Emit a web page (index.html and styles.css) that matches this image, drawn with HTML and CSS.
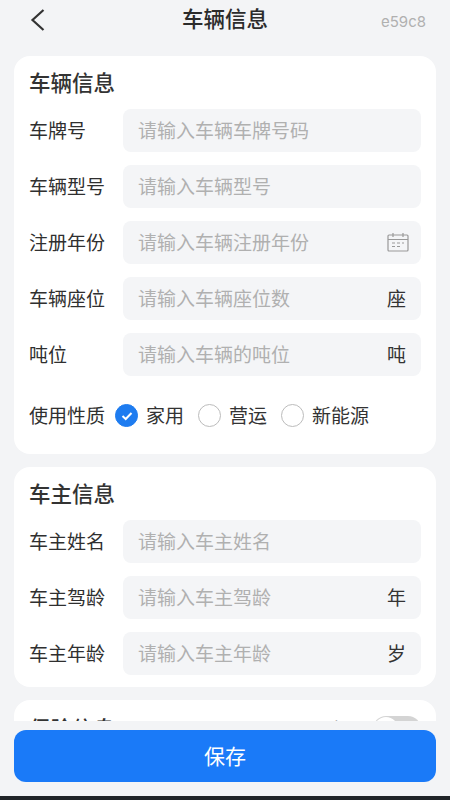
FILE: index.html
```html
<!DOCTYPE html>
<html lang="zh">
<head>
<meta charset="utf-8">
<title>车辆信息</title>
<link rel="stylesheet" href="styles.css">
</head>
<body>
<div class="screen">
  <header class="nav">
    <svg class="back" width="16" height="24" viewBox="0 0 16 24"><path d="M13.5 2 L2.5 12 L13.5 22" fill="none" stroke="#333" stroke-width="2.2"/></svg>
    <h1 class="nav-title">车辆信息</h1>
    <span class="nav-code">e59c8</span>
  </header>
  <main class="content">
    <section class="card">
      <h2 class="card-title">车辆信息</h2>
      <div class="row"><span class="label">车牌号</span><div class="field"><span class="ph">请输入车辆车牌号码</span></div></div>
      <div class="row"><span class="label">车辆型号</span><div class="field"><span class="ph">请输入车辆型号</span></div></div>
      <div class="row"><span class="label">注册年份</span><div class="field"><span class="ph">请输入车辆注册年份</span>
        <svg class="cal" width="22" height="20" viewBox="0 0 22 20" fill="none" stroke="#999" stroke-width="1.2"><rect x="1" y="3" width="20" height="16" rx="1"/><path d="M1 7.5H21M6 1V5M16 1V5"/><path d="M5 11H8M10 11H13M15 11H17M5 14.5H8M10 14.5H13" stroke-width="1.1"/></svg></div></div>
      <div class="row"><span class="label">车辆座位</span><div class="field"><span class="ph">请输入车辆座位数</span><span class="unit">座</span></div></div>
      <div class="row"><span class="label">吨位</span><div class="field"><span class="ph">请输入车辆的吨位</span><span class="unit">吨</span></div></div>
      <div class="radio-row"><span class="radio-label">使用性质</span>
        <span class="radio on"><svg width="12" height="10" viewBox="0 0 12 10"><path d="M1.5 5 L4.7 8 L10.5 2" fill="none" stroke="#fff" stroke-width="2"/></svg></span><span class="opt">家用</span>
        <span class="radio"></span><span class="opt">营运</span>
        <span class="radio"></span><span class="opt">新能源</span>
      </div>
    </section>
    <section class="card">
      <h2 class="card-title">车主信息</h2>
      <div class="row"><span class="label">车主姓名</span><div class="field"><span class="ph">请输入车主姓名</span></div></div>
      <div class="row"><span class="label">车主驾龄</span><div class="field"><span class="ph">请输入车主驾龄</span><span class="unit">年</span></div></div>
      <div class="row"><span class="label">车主年龄</span><div class="field"><span class="ph">请输入车主年龄</span><span class="unit">岁</span></div></div>
    </section>
    <section class="card insurance">
      <h2 class="card-title">保险信息</h2>
      <div class="ins-right"><span class="ins-text">购买</span><span class="toggle"><span class="knob"></span></span></div>
    </section>
  </main>
  <footer class="footer"><button class="save">保存</button></footer>
  <div class="home-bar"></div>
</div>
</body>
</html>
```
FILE: styles.css
```css
* { box-sizing: border-box; }
html, body { margin: 0; padding: 0; }
body { width: 450px; height: 800px; overflow: hidden; font-family: "Noto Sans CJK SC", "Noto Sans", sans-serif; color: #333; }
.screen { width: 450px; height: 800px; background: #f3f4f6; position: relative; overflow: hidden; }
.nav { height: 56px; display: flex; align-items: center; justify-content: space-between; padding: 0 24px 16px 30px; position: relative; }
.nav-title { position: absolute; left: 0; right: 0; top: 4px; margin: 0; text-align: center; font-size: 21.5px; line-height: 28px; font-weight: 500; color: #2b2b2b; }
.nav-code { font-family: "Inter", sans-serif; font-size: 15px; color: #b0b0b0; margin-top: 3px; }
.content { padding: 0 14px; display: flex; flex-direction: column; gap: 13px; }
.card { background: #fff; border-radius: 16px; padding: 12px 15px 12px; }
.card-title { margin: 0 0 13px; font-size: 21.5px; line-height: 28px; font-weight: 500; color: #333; }
.row { display: flex; align-items: center; height: 43px; margin-bottom: 13px; }
.row:last-child { margin-bottom: 0; }
.label { width: 94px; flex: none; font-size: 19px; line-height: 24px; padding-bottom: 2px; color: #2f2f2f; box-sizing: content-box; }
.field { flex: 1; height: 43px; background: #f4f5f7; border-radius: 8px; display: flex; align-items: center; justify-content: space-between; padding: 0 15px 2px 15px; }
.ph { font-size: 19px; line-height: 24px; color: #b0b0b0; }
.unit { font-size: 19px; line-height: 24px; color: #333; }
.cal { margin-right: -3px; }
.radio-row { display: flex; align-items: center; height: 43px; margin-top: 18px; margin-bottom: 5px; font-size: 19px; line-height: 24px; }
.radio-label { width: 86px; flex: none; color: #2f2f2f; padding-bottom: 1px; }
.radio { width: 23px; height: 23px; border-radius: 50%; border: 1px solid #bcbcbc; background: #fff; display: inline-flex; align-items: center; justify-content: center; flex: none; }
.radio.on { background: #1e7cf0; border-color: #1e7cf0; }
.opt { margin: 0 14px 0 8px; color: #333; padding-bottom: 1px; }
.insurance { height: 80px; position: relative; padding-top: 14px; }
.ins-right { position: absolute; right: 15px; top: 16px; display: flex; align-items: flex-start; gap: 10px; }
.ins-text { font-size: 19px; line-height: 26px; color: #333; }
.toggle { width: 48px; height: 26px; border-radius: 13px; background: #d4d4d4; position: relative; display: block; }
.knob { position: absolute; left: 1px; top: 1px; width: 24px; height: 24px; border-radius: 50%; background: #fff; }
.footer { position: absolute; left: 0; right: 0; top: 721px; height: 75px; background: #f3f4f6; padding: 9px 14px 0; }
.save { width: 100%; height: 52px; border: 0; border-radius: 12px; background: #1a7af8; color: #fff; font: 400 21px "Noto Sans CJK SC", sans-serif; padding-bottom: 3px; }
.home-bar { position: absolute; left: 0; right: 0; bottom: 0; height: 4px; background: #202428; }
```
